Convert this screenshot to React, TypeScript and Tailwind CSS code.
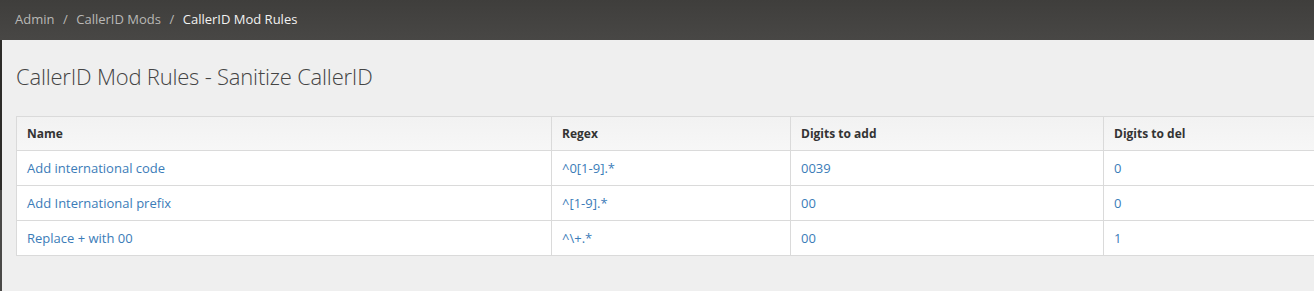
import React from "react";

const rows = [
  { name: "Add international code", regex: "^0[1-9].*", add: "0039", del: "0" },
  { name: "Add International prefix", regex: "^[1-9].*", add: "00", del: "0" },
  { name: "Replace + with 00", regex: "^\\+.*", add: "00", del: "1" },
];

const App: React.FC = () => {
  return (
    <div className="w-[1314px] h-[291px] overflow-hidden bg-[#efefef] font-['Open_Sans',sans-serif] text-[13px]">
      {/* breadcrumb bar */}
      <div className="h-10 bg-gradient-to-b from-[#3f3e3c] to-[#484745] flex items-center px-[15px] text-[13px]">
        <span className="text-[#b9b8b6]">Admin</span>
        <span className="text-[#b9b8b6] px-[8.5px]">/</span>
        <span className="text-[#b9b8b6]">CallerID Mods</span>
        <span className="text-[#b9b8b6] px-[8.5px]">/</span>
        <span className="text-[#f2f2f2]">CallerID Mod Rules</span>
      </div>
      <div className="flex h-[251px]">
        {/* sidebar edge */}
        <div className="w-[2px] flex flex-col shrink-0">
          <div className="h-[150px] bg-[#2c2b29]" />
          <div className="flex-1 bg-[#4a4947]" />
        </div>
        <div className="flex-1 pl-[14px]">
          <h1 className="text-[22px] font-light text-[#444] leading-none mt-[25px] mb-[29px] tracking-[-0.2px]">
            CallerID Mod Rules - Sanitize CallerID
          </h1>
          <table className="w-[1320px] border-collapse bg-white text-[13px]">
            <thead>
              <tr className="h-[34px] bg-gradient-to-b from-[#f2f2f2] to-[#f7f7f7]">
                <th className="border border-[#dadada] text-left font-bold text-[12px] text-[#333] pl-[10px] w-[535px]">
                  Name
                </th>
                <th className="border border-[#dadada] text-left font-bold text-[12px] text-[#333] pl-[10px] w-[239px]">
                  Regex
                </th>
                <th className="border border-[#dadada] text-left font-bold text-[12px] text-[#333] pl-[10px] w-[313px]">
                  Digits to add
                </th>
                <th className="border border-[#dadada] text-left font-bold text-[12px] text-[#333] pl-[10px]">
                  Digits to del
                </th>
              </tr>
            </thead>
            <tbody>
              {rows.map((r, i) => (
                <tr key={i} className="h-[35px]">
                  <td className="border border-[#dadada] pl-[10px] pt-[2px] text-[#3b7cb8]">{r.name}</td>
                  <td className="border border-[#dadada] pl-[10px] pt-[2px] text-[#3b7cb8]">{r.regex}</td>
                  <td className="border border-[#dadada] pl-[10px] pt-[2px] text-[#3b7cb8]">{r.add}</td>
                  <td className="border border-[#dadada] pl-[10px] pt-[2px] text-[#3b7cb8]">{r.del}</td>
                </tr>
              ))}
            </tbody>
          </table>
        </div>
      </div>
    </div>
  );
};

export default App;
